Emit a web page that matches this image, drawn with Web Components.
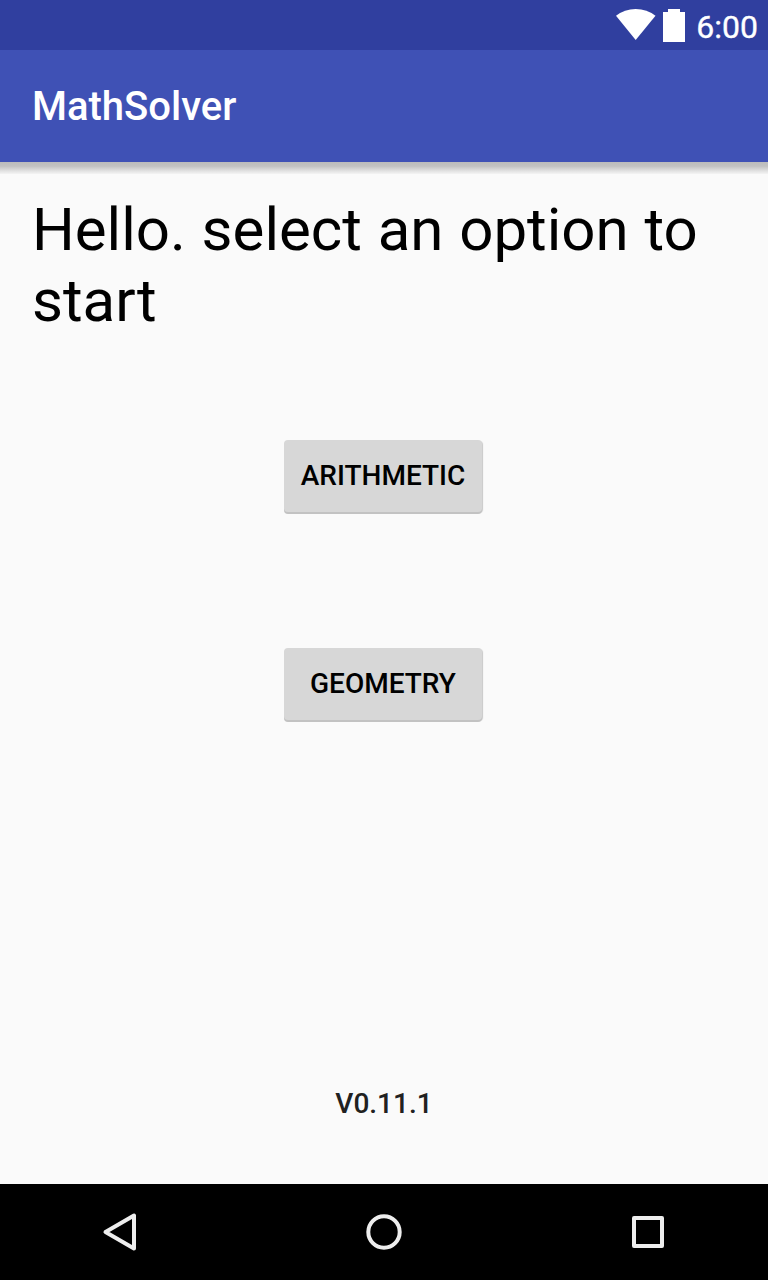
<!DOCTYPE html>
<html lang="en">
<head>
<meta charset="utf-8">
<title>MathSolver</title>
<style>
html,body{margin:0;padding:0;height:100%}
body{font-family:Roboto,"Noto Sans",sans-serif;background:#fafafa;overflow:hidden}
</style>
</head>
<body>
<math-app></math-app>
<script>
function define(name, markup){
  const template=document.createElement('template');
  template.innerHTML=markup;
  customElements.define(name,class extends HTMLElement{
    constructor(){
      super();
      this.attachShadow({mode:'open'}).appendChild(template.content.cloneNode(true));
    }
  });
}

define('status-bar',`
<style>
:host{display:flex;justify-content:flex-end;height:50px;box-sizing:border-box;padding-right:10px;background:#303f9f;color:#fff}
svg{display:block;flex:none}
.time{font-size:32px;-webkit-text-stroke:.35px #fff;line-height:38px;padding-top:8px;margin-left:10px;white-space:nowrap}
</style>
<svg width="71" height="50" viewBox="0 0 71 50" fill="#fff"><path d="M1 15.800Q9.500 9 20.700 9Q32 9 40.500 15.800L20.700 40Z"/><path d="M48 12h5V9h12v3h5v30H48z"/></svg>
<span class="time"><slot></slot></span>`);

define('app-toolbar',`
<style>
:host{display:flex;align-items:center;height:112px;box-sizing:border-box;padding:2px 0 0 32px;background:#3f51b5;color:#fff;font-size:40px;font-weight:500;line-height:48px}
</style><span><slot></slot></span>`);

define('toolbar-shadow',`
<style>:host{display:block;height:12px;background:linear-gradient(#bcbcbc 0,#c2c2c2 35%,#dedede 70%,#f4f4f4 100%)}</style>`);

define('raised-button',`
<style>
:host{display:block;width:198px;margin-right:2px}
button{display:block;width:100%;height:72px;box-sizing:border-box;border:0;border-radius:4px;background:#d7d7d7;box-shadow:0 2px 0 #c2c2c2,1px 1px 1px #c8c8c8;color:#000;font-family:inherit;font-size:28px;font-weight:500;line-height:34px;padding:0 0 1px;white-space:nowrap}
</style><button><slot></slot></button>`);

define('nav-bar',`
<style>
:host{display:flex;justify-content:center;height:96px;background:#000}
svg{display:block;width:264px;height:96px;flex:none;fill:none;stroke:#eee;stroke-width:4;stroke-linejoin:round}
.back{width:252px}.recent{width:252px}
</style>
<svg class="back" viewBox="0 0 252 96"><path d="M105.500 48L134 31.500V64.500Z"/></svg>
<svg viewBox="252 0 264 96"><circle cx="384" cy="48" r="15.700"/></svg>
<svg class="recent" viewBox="516 0 252 96"><rect x="634" y="34" width="28" height="28"/></svg>`);

define('math-app',`
<style>
:host{display:flex;flex-direction:column;width:768px;height:1280px;background:#fafafa}
status-bar,app-toolbar,toolbar-shadow,nav-bar{flex:none}
main{flex:1;display:flex;flex-direction:column;align-items:center;padding:20px 32px 0}
h1{align-self:stretch;margin:0;font-size:60px;font-weight:400;line-height:71px;word-spacing:.9px;color:#000}
.first{margin-top:104px}.second{margin-top:136px}
.version{margin:auto 0 63px;font-size:28px;font-weight:500;line-height:34px;color:#212121}
</style>
<status-bar>6:00</status-bar>
<app-toolbar>MathSolver</app-toolbar>
<toolbar-shadow></toolbar-shadow>
<main>
<h1>Hello. select an option to start</h1>
<raised-button class="first">ARITHMETIC</raised-button>
<raised-button class="second">GEOMETRY</raised-button>
<span class="version">V0.11.1</span>
</main>
<nav-bar></nav-bar>`);
</script>
</body>
</html>
